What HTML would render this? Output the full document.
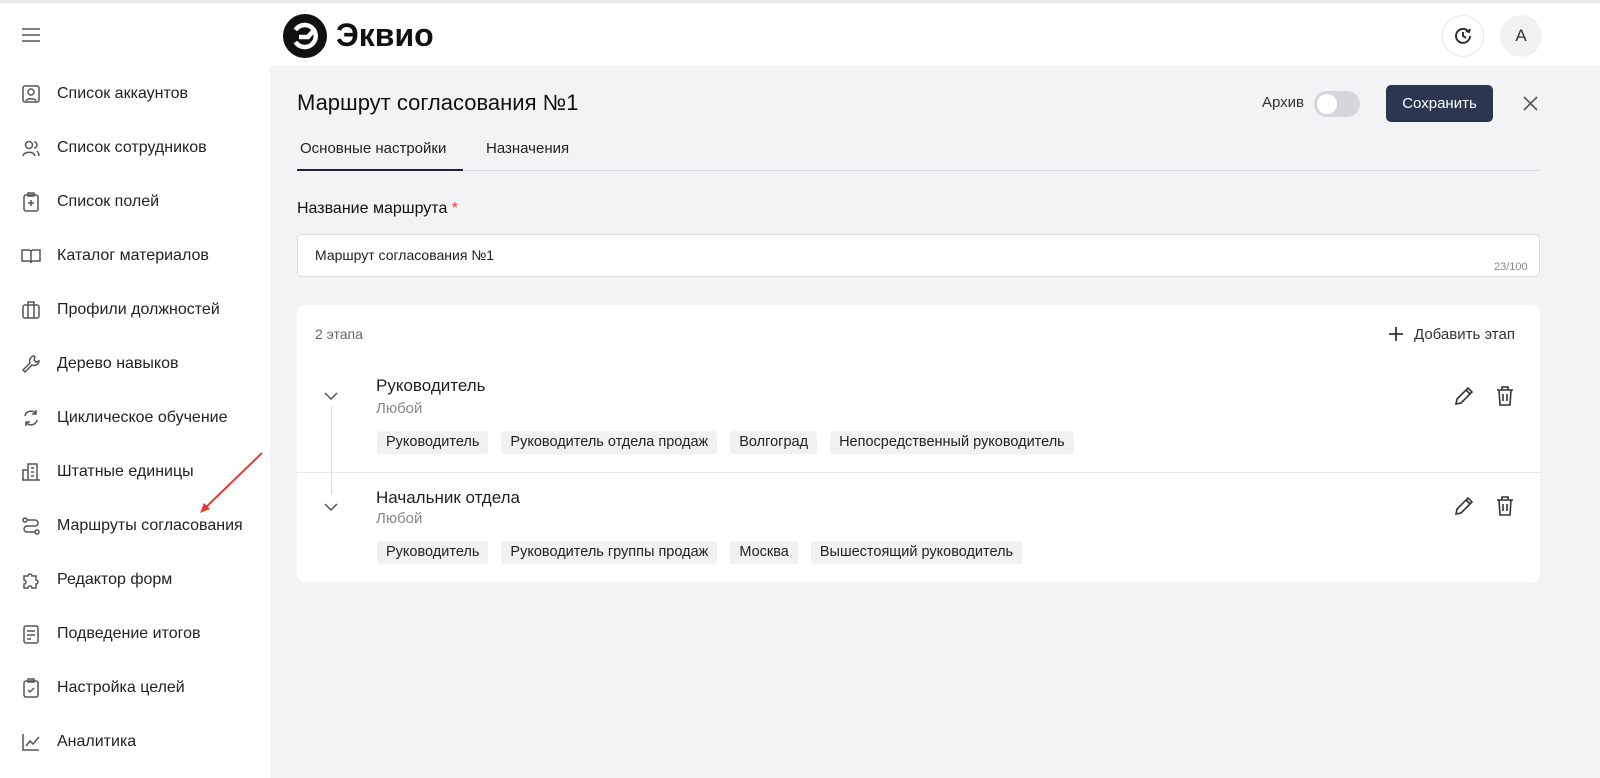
<!DOCTYPE html>
<html><head><meta charset="utf-8"><style>
*{box-sizing:border-box;margin:0;padding:0}
body{width:1600px;height:778px;overflow:hidden;font-family:"Liberation Sans",sans-serif;color:#1d1f24;background:#f2f3f5;position:relative}
.topline{position:absolute;left:0;top:0;width:1600px;height:3px;background:#e6e7ea}
.header{position:absolute;left:0;top:3px;width:1600px;height:63px;background:#fff}
.side{position:absolute;left:0;top:66px;width:270px;height:712px;background:#fff}
.item{position:absolute;left:0;height:30px;display:flex;align-items:center;font-size:16px;color:#222}
.item svg{position:absolute;left:21px;width:20px;height:20px}
.item span{position:absolute;left:57px;white-space:nowrap}
.abs{position:absolute;white-space:nowrap}
.tags{position:absolute;left:377px;display:flex;gap:13px}
.tag{height:23px;background:#f0f1f3;border-radius:3px;font-size:14.5px;line-height:23px;padding:0 9px;color:#222}
</style></head><body>
<div class="topline"></div>
<div class="header">
 <svg class="abs" style="left:21px;top:24px" width="20" height="16" viewBox="0 0 20 16"><path d="M1 2h18M1 8h18M1 14h18" stroke="#555" stroke-width="1.6"/></svg>
 <svg class="abs" style="left:283px;top:11px" width="44" height="44" viewBox="0 0 44 44"><circle cx="22" cy="22" r="22" fill="#111"/><path d="M12.5 16a11 11 0 1 1 0 12" stroke="#fff" stroke-width="4.5" fill="none"/><path d="M16 23h9l7-8" stroke="#fff" stroke-width="4.5" fill="none"/></svg>
 <div class="abs" style="left:336px;top:14px;font-size:32px;font-weight:bold;color:#111">Эквио</div>
 <div class="abs" style="left:1442px;top:12px;width:42px;height:42px;border-radius:50%;border:1px solid #e6e7ea;background:#fff"></div>
 <svg class="abs" style="left:1452px;top:22px" width="22" height="22" viewBox="0 0 22 22"><path d="M18 11a7 7 0 1 1-2-5" stroke="#333" stroke-width="2" fill="none"/><path d="M11 7v4l3 2" stroke="#333" stroke-width="2" fill="none"/><path d="M14 6l3 1 1-3" stroke="#333" stroke-width="2" fill="none"/></svg>
 <div class="abs" style="left:1500px;top:12px;width:42px;height:42px;border-radius:50%;background:#f0f1f3;text-align:center;line-height:42px;font-size:17px;color:#333">A</div>
</div>
<div class="side">
 <div class="item" style="top:13px"><svg viewBox="0 0 20 20" fill="none" stroke="#555" stroke-width="1.5"><rect x="2" y="2" width="16" height="16" rx="2"/><circle cx="10" cy="8" r="3"/><path d="M5 17c1-3 9-3 10 0"/></svg><span>Список аккаунтов</span></div>
 <div class="item" style="top:67px"><svg viewBox="0 0 20 20" fill="none" stroke="#555" stroke-width="1.5"><circle cx="8" cy="7" r="3.5"/><path d="M2 18c1-5 11-5 12 0M13 4a3 3 0 0 1 0 6M16 13c1 1 2 3 2 5"/></svg><span>Список сотрудников</span></div>
 <div class="item" style="top:121px"><svg viewBox="0 0 20 20" fill="none" stroke="#555" stroke-width="1.5"><rect x="3" y="3" width="14" height="16" rx="2"/><rect x="7" y="1" width="6" height="3"/><path d="M10 8v6M7 11h6"/></svg><span>Список полей</span></div>
 <div class="item" style="top:175px"><svg viewBox="0 0 20 20" fill="none" stroke="#555" stroke-width="1.5"><path d="M1 4h7c1 0 2 1 2 2v11c0-1-1-2-2-2H1zM19 4h-7c-1 0-2 1-2 2v11c0-1 1-2 2-2h7z"/></svg><span>Каталог материалов</span></div>
 <div class="item" style="top:229px"><svg viewBox="0 0 20 20" fill="none" stroke="#555" stroke-width="1.5"><rect x="2" y="5" width="16" height="13" rx="2"/><path d="M7 5V2h6v3M7 5v13M13 5v13"/></svg><span>Профили должностей</span></div>
 <div class="item" style="top:283px"><svg viewBox="0 0 20 20" fill="none" stroke="#555" stroke-width="1.5"><path d="M13 2a5 5 0 0 0-4 7l-7 7 2 2 7-7a5 5 0 0 0 7-4l-3 1-2-2 1-3z"/></svg><span>Дерево навыков</span></div>
 <div class="item" style="top:337px"><svg viewBox="0 0 20 20" fill="none" stroke="#555" stroke-width="1.5"><path d="M4 8a6 6 0 0 1 11-2M16 12a6 6 0 0 1-11 2M15 2v4h-4M5 18v-4h4"/></svg><span>Циклическое обучение</span></div>
 <div class="item" style="top:391px"><svg viewBox="0 0 20 20" fill="none" stroke="#555" stroke-width="1.5"><path d="M2 18V8h5v10M7 18V2h9v16M1 18h18M10 6h3M10 10h3M10 14h3"/></svg><span>Штатные единицы</span></div>
 <div class="item" style="top:445px"><svg viewBox="0 0 20 20" fill="none" stroke="#555" stroke-width="1.5"><circle cx="4" cy="4" r="2"/><circle cx="16" cy="16" r="2"/><path d="M6 4h8a3 3 0 0 1 0 6H6a3 3 0 0 0 0 6h8"/></svg><span>Маршруты согласования</span></div>
 <div class="item" style="top:499px"><svg viewBox="0 0 20 20" fill="none" stroke="#555" stroke-width="1.5"><path d="M3 6h4a2 2 0 1 1 4 0h4v4a2 2 0 1 1 0 4v4h-4a2 2 0 1 0-4 0H3v-4a2 2 0 1 0 0-4z"/></svg><span>Редактор форм</span></div>
 <div class="item" style="top:553px"><svg viewBox="0 0 20 20" fill="none" stroke="#555" stroke-width="1.5"><rect x="3" y="2" width="14" height="17" rx="2"/><path d="M6 7h8M6 11h8M6 15h4"/></svg><span>Подведение итогов</span></div>
 <div class="item" style="top:607px"><svg viewBox="0 0 20 20" fill="none" stroke="#555" stroke-width="1.5"><rect x="3" y="3" width="14" height="16" rx="2"/><rect x="7" y="1" width="6" height="3"/><path d="M7 12l2 2 4-4"/></svg><span>Настройка целей</span></div>
 <div class="item" style="top:661px"><svg viewBox="0 0 20 20" fill="none" stroke="#555" stroke-width="1.5"><path d="M2 2v16h16M5 14l4-5 3 3 6-7"/></svg><span>Аналитика</span></div>
</div>
<svg class="abs" style="left:190px;top:445px" width="80" height="75"><path d="M72 8L12 66" stroke="#e53935" stroke-width="2"/><path d="M10 68l4-10 6 6z" fill="#e53935"/></svg>

<div class="abs" style="left:297px;top:90px;font-size:22px;color:#111">Маршрут согласования №1</div>
<div class="abs" style="left:1262px;top:94px;font-size:15px;color:#333">Архив</div>
<div class="abs" style="left:1314px;top:91px;width:46px;height:26px;border-radius:13px;background:#d4d6db"></div>
<div class="abs" style="left:1317px;top:94px;width:20px;height:20px;border-radius:50%;background:#fff"></div>
<div class="abs" style="left:1386px;top:85px;width:107px;height:37px;border-radius:5px;background:#2b3650;color:#fff;font-size:15px;text-align:center;line-height:37px">Сохранить</div>
<svg class="abs" style="left:1523px;top:96px" width="15" height="15"><path d="M1 1l13 13M14 1L1 14" stroke="#555" stroke-width="1.6"/></svg>

<div class="abs" style="left:300px;top:140px;font-size:15px;color:#222">Основные настройки</div>
<div class="abs" style="left:486px;top:140px;font-size:15px;color:#222">Назначения</div>
<div class="abs" style="left:297px;top:170px;width:1243px;height:1px;background:#dcdde1"></div>
<div class="abs" style="left:297px;top:169px;width:166px;height:2px;background:#1d2438"></div>

<div class="abs" style="left:297px;top:200px;font-size:16px;color:#111">Название маршрута <span style="color:#e53935">*</span></div>
<div class="abs" style="left:297px;top:234px;width:1243px;height:43px;background:#fff;border:1px solid #dcdde1;border-radius:5px"></div>
<div class="abs" style="left:315px;top:247px;font-size:14px">Маршрут согласования №1</div>
<div class="abs" style="left:1494px;top:261px;font-size:11px;color:#888">23/100</div>

<div class="abs" style="left:297px;top:305px;width:1243px;height:277px;background:#fff;border-radius:8px"></div>
<div class="abs" style="left:315px;top:326px;font-size:14px;color:#666">2 этапа</div>
<svg class="abs" style="left:1388px;top:326px" width="16" height="16"><path d="M8 1v14M1 8h14" stroke="#333" stroke-width="1.8"/></svg>
<div class="abs" style="left:1414px;top:326px;font-size:15px;color:#333">Добавить этап</div>
<div class="abs" style="left:297px;top:472px;width:1243px;height:1px;background:#e8e9ec"></div>
<div class="abs" style="left:331px;top:406px;width:1px;height:88px;background:#dcdde1"></div>
<svg class="abs" style="left:324px;top:392px" width="14" height="9"><path d="M1 1l6 6 6-6" stroke="#555" stroke-width="1.5" fill="none"/></svg>
<svg class="abs" style="left:324px;top:503px" width="14" height="9"><path d="M1 1l6 6 6-6" stroke="#555" stroke-width="1.5" fill="none"/></svg>

<div class="abs" style="left:376px;top:376px;font-size:17px">Руководитель</div>
<div class="abs" style="left:376px;top:400px;font-size:15px;color:#888">Любой</div>
<div class="tags" style="top:431px"><div class="tag">Руководитель</div><div class="tag">Руководитель отдела продаж</div><div class="tag">Волгоград</div><div class="tag">Непосредственный руководитель</div></div>

<div class="abs" style="left:376px;top:488px;font-size:17px">Начальник отдела</div>
<div class="abs" style="left:376px;top:510px;font-size:15px;color:#888">Любой</div>
<div class="tags" style="top:541px"><div class="tag">Руководитель</div><div class="tag">Руководитель группы продаж</div><div class="tag">Москва</div><div class="tag">Вышестоящий руководитель</div></div>

<svg class="abs" style="left:1453px;top:385px" width="22" height="22" viewBox="0 0 22 22"><path d="M3 19l1-5L15 3l4 4L8 18zM13 5l4 4" stroke="#333" stroke-width="1.6" fill="none"/></svg>
<svg class="abs" style="left:1494px;top:385px" width="22" height="22" viewBox="0 0 22 22"><path d="M3 5h16M8 5V2h6v3M5 5l1 15h10l1-15M9 9v7M13 9v7" stroke="#333" stroke-width="1.6" fill="none"/></svg>
<svg class="abs" style="left:1453px;top:495px" width="22" height="22" viewBox="0 0 22 22"><path d="M3 19l1-5L15 3l4 4L8 18zM13 5l4 4" stroke="#333" stroke-width="1.6" fill="none"/></svg>
<svg class="abs" style="left:1494px;top:495px" width="22" height="22" viewBox="0 0 22 22"><path d="M3 5h16M8 5V2h6v3M5 5l1 15h10l1-15M9 9v7M13 9v7" stroke="#333" stroke-width="1.6" fill="none"/></svg>
</body></html>
